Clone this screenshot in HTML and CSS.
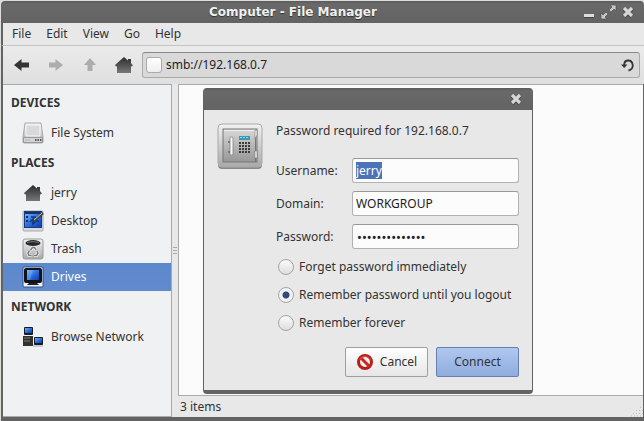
FILE: index.html
```html
<!DOCTYPE html>
<html lang="en">
<head>
<meta charset="utf-8">
<title>Computer - File Manager</title>
<link rel="stylesheet" href="styles.css">
</head>
<body>
<svg class="defs" width="0" height="0" aria-hidden="true">
  <defs>
    <linearGradient id="dark" x1="0" y1="0" x2="0" y2="1"><stop offset="0" stop-color="#2c2c2c"/><stop offset="1" stop-color="#777"/></linearGradient>
    <linearGradient id="metal" x1="0" y1="0" x2="0" y2="1"><stop offset="0" stop-color="#f2f2f2"/><stop offset="1" stop-color="#a9a9a9"/></linearGradient>
    <linearGradient id="door" x1="0" y1="0" x2="0" y2="1"><stop offset="0" stop-color="#d8d8d8"/><stop offset="1" stop-color="#969696"/></linearGradient>
    <linearGradient id="screen" x1="0" y1="0" x2="1" y2="1"><stop offset="0" stop-color="#76b2fa"/><stop offset=".5" stop-color="#2d70dc"/><stop offset="1" stop-color="#0c3fae"/></linearGradient>
    <symbol id="home" viewBox="0 0 18 16"><path d="M9 0L13 3.500V2h3v4l2 2.500-1.500 1H16V16H2V9.500H1L0 8z" fill="url(#dark)"/></symbol>
    <symbol id="close" viewBox="0 0 12 12"><path d="M2 2.500l8 8M10 2.500l-8 8" stroke="#3d3d3d" stroke-width="4.200"/><path d="M2 2l8 8M10 2l-8 8" stroke="#d6d6d6" stroke-width="3.200"/></symbol>
  </defs>
</svg>
<div class="window">
  <header class="titlebar">
    <h1>Computer - File Manager</h1>
    <div class="controls">
      <button aria-label="Minimize"><svg width="12" height="14"><path d="M1 9h10v4H1z" fill="#444"/><path d="M1 9h10v3H1z" fill="#ddd"/></svg></button>
      <button aria-label="Maximize"><svg width="17" height="16"><path d="M1 15V9l2 2 3-3 2 2-3 3 2 2zM16 1v6l-2-2-3 3-2-2 3-3-2-2z" fill="#c6c6c6" stroke="#484848" stroke-width=".6"/></svg></button>
      <button aria-label="Close"><svg width="12" height="12"><use href="#close"/></svg></button>
    </div>
  </header>
  <nav class="menubar">
    <button>File</button><button>Edit</button><button>View</button><button>Go</button><button>Help</button>
  </nav>
  <div class="toolbar">
    <button class="tool" aria-label="Back"><svg width="16" height="14"><path d="M0 7l7.500-6v3.500H15v5H7.500V13z" fill="#343434"/></svg></button>
    <button class="tool" aria-label="Forward" disabled><svg width="16" height="14"><path d="M15 7L7.500 1v3.500H1v5h6.500V13z" fill="#adadad"/></svg></button>
    <button class="tool" aria-label="Up" disabled><svg width="14" height="16"><path d="M7 1L1 8h3.500v6h5V8H13z" fill="#adadad"/></svg></button>
    <button class="tool" aria-label="Home"><svg width="18" height="16"><use href="#home"/></svg></button>
    <div class="location">
      <span class="path-icon"></span>
      <input aria-label="Location" value="smb://192.168.0.7">
      <button aria-label="Reload"><svg width="14" height="14"><path d="M7.500 12.500c3-.5 4.500-3 4.200-5.500C11.300 4 9.500 2.500 7.200 2.500 5 2.500 3.200 4 3.200 7" fill="none" stroke="#333" stroke-width="1.800"/><path d="M0 6.500h6.500L3.200 10z" fill="#333"/></svg></button>
    </div>
  </div>
  <div class="body">
    <aside class="sidebar">
      <h2>DEVICES</h2>
      <a href="#fs"><svg width="22" height="22"><path d="M3 1h16l2 14v5a1 1 0 0 1-1 1H2a1 1 0 0 1-1-1v-5z" fill="url(#metal)" stroke="#aaa"/><path d="M4 3h14v11H4z" fill="#d9d9d9" stroke="#f8f8f8"/><path d="M1.500 15.500h19v5h-19z" fill="#d5d5d5" stroke="#999"/><path d="M13 18h1.500m1 0H17m1 0h1.500" stroke="#555" stroke-width="2"/><path d="M3 18h5" stroke="#b5b5b5"/></svg>File System</a>
      <h2>PLACES</h2>
      <a href="#home-folder"><svg width="22" height="22"><use href="#home" x="2" y="3" width="18" height="16"/></svg>jerry</a>
      <a href="#desktop"><svg width="22" height="22"><rect x="1" y="1" width="20" height="20" rx="1" fill="#d7dae0" stroke="#aaa"/><rect x="2" y="1" width="18" height="17" fill="#173b83"/><path d="M3 3h16v14H3z" fill="url(#screen)"/><path d="M3 2h16v2H3z" fill="#1b3262"/><path d="M4 6h2v2H4zm0 4h2v2H4z" fill="#0a2c74"/><path d="M8 12l3-3v5l3-3h3M9 7h5" fill="none" stroke="#12377c" stroke-width="1.500"/><path d="M12 11l9-8" stroke="#41474b" stroke-width="2.500"/><path d="M12 10l8-7" stroke="#b5c3bd"/></svg>Desktop</a>
      <a href="#trash"><svg width="22" height="22"><rect x="1" y="1" width="20" height="20" rx="2" fill="url(#metal)" stroke="#999"/><ellipse cx="11" cy="5" rx="7.500" ry="3" fill="#292929"/><path d="M5 4.500q6-2 12 0" fill="none" stroke="#777"/><path d="M8.500 12l2-2.500h2l1.500 2M15 13l1 2.500-1.500 2H12M9.500 17.500H7L6 15l1.500-2.500" fill="none" stroke="#f8f8f8" stroke-width="3"/><path d="M8.500 12l2-2.500h2l1.500 2M15 13l1 2.500-1.500 2H12M9.500 17.500H7L6 15l1.500-2.500" fill="none" stroke="#777" stroke-width="1.500"/></svg>Trash</a>
      <a href="#drives" class="selected" aria-current="page"><svg width="22" height="22"><rect x="1" y="1" width="20" height="20" rx="1" fill="#f0f1f3" stroke="#2f518d"/><rect x="2" y="2" width="18" height="15" rx="2" fill="#101319"/><path d="M5 4h12v10H5z" fill="url(#screen)"/><path d="M5 4h6L8 14H5z" fill="#80b7ff" opacity=".35"/><path d="M7 17h8l2 2H5z" fill="#202020"/></svg>Drives</a>
      <h2>NETWORK</h2>
      <a href="#network"><svg width="22" height="22"><path d="M1 10h10v10H1z" fill="#33312f"/><path d="M2 12h6m-6 3h6" stroke="#85786b"/><rect x="2" y="1" width="9" height="8" rx="1" fill="#161c27"/><path d="M3 2h7v5H3z" fill="url(#screen)"/><path d="M11 18h10v3H11z" fill="#c8cacc"/><rect x="12" y="11" width="9" height="8" rx="1" fill="#161c27"/><path d="M13 12h7v5h-7z" fill="url(#screen)"/></svg>Browse Network</a>
    </aside>
    <div class="splitter"></div>
    <div class="content">
      <main class="files">
        <form class="dialog" role="dialog" aria-label="Password required">
          <div class="dialog-title"><button type="button" aria-label="Close dialog"><svg width="12" height="12"><use href="#close"/></svg></button></div>
          <div class="dialog-body">
            <svg class="safe" width="46" height="47">
              <rect x="1" y="2" width="44" height="44" rx="4" fill="#888"/>
              <rect x="1" y="1" width="44" height="43" rx="4" fill="url(#metal)" stroke="#aaa"/>
              <rect x="6" y="6" width="34" height="33" fill="url(#door)" stroke="#777"/>
              <path d="M7 7.500h32" stroke="#eee"/>
              <path d="M11 18h4v2h-4zM11 28h4v2h-4z" fill="#777"/>
              <rect x="13" y="14" width="3" height="18" rx="1" fill="#f6f6f6" stroke="#777" stroke-width=".7"/>
              <path d="M22 13h11v4H22z" fill="#3a9bb8"/><path d="M23 14.500h9" stroke="#91d5e8" stroke-dasharray="2 1"/>
              <path d="M22 20h11M22 23h11M22 26h11M22 29h11" stroke="#3c3c3c" stroke-width="2" stroke-dasharray="2 1"/>
              <path d="M38.500 8v31" stroke="#777"/>
              <path d="M38 7h2v5l-2 4zM38 28h2v7h-2z" fill="#fafafa" stroke="#777" stroke-width=".6"/>
            </svg>
            <div class="form">
              <p>Password required for 192.168.0.7</p>
              <div class="fields">
                <label for="user">Username:</label><input id="user" value="jerry">
                <label for="domain">Domain:</label><input id="domain" value="WORKGROUP">
                <label for="pass">Password:</label><input id="pass" type="password" value="secretpassword">
              </div>
              <label class="choice"><input type="radio" name="keep">Forget password immediately</label>
              <label class="choice"><input type="radio" name="keep" checked>Remember password until you logout</label>
              <label class="choice"><input type="radio" name="keep">Remember forever</label>
              <div class="actions">
                <button type="button"><svg width="18" height="18"><circle cx="9" cy="9" r="6.500" fill="#eee" stroke="#b81f18" stroke-width="3"/><path d="M4.500 4.500l9 9" stroke="#c8281f" stroke-width="3"/><path d="M3.500 7a6 6 0 0 1 11 0" fill="none" stroke="#e4564c"/></svg>Cancel</button>
                <button type="submit" class="primary">Connect</button>
              </div>
            </div>
          </div>
        </form>
      </main>
      <footer class="status"><span>3 items</span><svg width="12" height="12"><path d="M9 2.500h3M5 5.500h7M2 8.500h10M0 11h12" stroke="#bbb" stroke-dasharray="1 2"/></svg></footer>
    </div>
  </div>
</div>
<script src="script.js"></script>
</body>
</html>
```
FILE: styles.css
```css
* { box-sizing: border-box; }
html, body { height: 100%; margin: 0; }
body {
  background: #dcdedb;
  color: #333;
  font: 12px/16px "Noto Sans", sans-serif;
}
button, input { font: inherit; color: inherit; margin: 0; }
button { padding: 0; border: 0; background: none; }
svg { display: block; flex: none; }
.defs { position: absolute; }

.window {
  display: flex;
  flex-direction: column;
  min-height: 100vh;
  border: 1px solid #dcdedb;
  border-width: 1px 0 0 1px;
  background: #e8e8e8;
}
.titlebar {
  display: flex;
  align-items: center;
  height: 22px;
  padding: 0 10px 0 2px;
  border-radius: 4px 4px 0 0;
  background: linear-gradient(#5a5a5a, #696969 3px, #636363);
}
.titlebar h1 {
  flex: 1;
  margin: 0;
  color: #f0f0f0;
  font: bold 12px/20px "DejaVu Sans", sans-serif;
  text-align: center;
  text-shadow: 0 1px 1px #333;
}
.controls { display: flex; align-items: center; gap: 5px; }

.menubar {
  display: flex;
  gap: 15px;
  height: 23px;
  padding: 0 9px;
  border-left: 2px solid #636363;
  border-bottom: 1px solid #c4c4c4;
}
.toolbar {
  display: flex;
  align-items: center;
  height: 38px;
  padding: 0 4px 0 2px;
  border-left: 2px solid #636363;
  background: linear-gradient(#ebebeb, #dfdfdf);
}
.tool { display: grid; place-items: center; width: 34px; height: 34px; }
.location {
  display: flex;
  flex: 1;
  align-items: center;
  gap: 4px;
  height: 26px;
  margin-left: 1px;
  padding: 0 4px 0 3px;
  border: 1px solid #aaa;
  border-top-color: #888;
  border-radius: 3px;
  background: #d9d9d9;
}
.location input { flex: 1; min-width: 0; border: 0; padding: 0; background: none; color: #222; }
.path-icon {
  width: 16px;
  height: 16px;
  border: 1px solid #aaa;
  border-radius: 3px;
  background: linear-gradient(#fff, #eee);
}

.body {
  display: flex;
  flex: 1;
  border: solid #636363;
  border-width: 0 1px 4px 2px;
}
.sidebar {
  width: 169px;
  padding-top: 2px;
  border: 1px solid #aaa;
  border-left: 0;
  background: #f0f1f3;
}
.sidebar h2 {
  margin: 0;
  padding: 0 8px;
  font-size: 12px;
  line-height: 32px;
}
.sidebar a {
  display: flex;
  align-items: center;
  gap: 7px;
  height: 28px;
  padding-left: 19px;
  color: inherit;
  text-decoration: none;
}
.sidebar .selected {
  background: linear-gradient(#5c88cc, #628bcd);
  color: #fff;
}
.splitter { width: 6px; background: linear-gradient(#aaa, #aaa) center 163px / 4px 1px no-repeat, linear-gradient(#aaa, #aaa) center 166px / 4px 1px no-repeat, linear-gradient(#aaa, #aaa) center 169px / 4px 1px no-repeat; }
.content { display: flex; flex: 1; flex-direction: column; min-width: 0; }
.files {
  position: relative;
  flex: 1;
  border: 1px solid #aaa;
  border-right: 0;
  background: #fbfbfb;
}
.status {
  display: flex;
  align-items: center;
  justify-content: space-between;
  height: 21px;
  padding-left: 2px;
}
.status svg { align-self: flex-end; }

.dialog {
  position: absolute;
  top: 3px;
  left: 24px;
  width: 330px;
  border: solid #636363;
  border-width: 0 1px 4px;
  border-radius: 4px;
  background: #e8e8e8;
}
.dialog-title {
  display: flex;
  align-items: center;
  justify-content: flex-end;
  height: 22px;
  padding-right: 10px;
  border-radius: 3px 3px 0 0;
  background: linear-gradient(#5a5a5a, #696969 3px, #636363);
}
.dialog-body { display: flex; gap: 13px; padding: 13px; }
.form { flex: 1; min-width: 0; }
.form p { margin: 0 0 19px; }
.fields {
  display: grid;
  grid-template-columns: 68px 1fr;
  gap: 8px;
  align-items: center;
  margin-bottom: 4px;
}
.fields input {
  width: 100%;
  height: 25px;
  padding: 0 3px;
  border: 1px solid #b2b2b2;
  border-top-color: #999;
  border-radius: 3px;
  outline: 0;
  background: #fcfcfc;
  color: #222;
}
.fields input[type="password"] { padding: 0 4px; font-size: 13px; }
.fields input::selection { background: #4b74b8; color: #fff; }
.choice { display: flex; align-items: center; gap: 5px; height: 28px; padding-left: 2px; white-space: nowrap; }
.choice input {
  appearance: none;
  width: 16px;
  height: 16px;
  border: 1px solid #a5a5a5;
  border-radius: 50%;
  background: linear-gradient(#fafafa, #dedede);
}
.choice input:checked { background: radial-gradient(circle, #334a78 3px, #f2f2f2 4px); }
.actions { display: flex; justify-content: flex-end; gap: 8px; margin-top: 10px; }
.actions button {
  display: flex;
  align-items: center;
  justify-content: center;
  gap: 6px;
  width: 83px;
  height: 30px;
  border: 1px solid #a0a0a0;
  border-radius: 2px;
  background: linear-gradient(#fefefe, #e6e6e6);
}
.actions .primary {
  border-color: #6680ac;
  background: linear-gradient(#b0c8f0, #8eacdd);
}
```
FILE: script.js
```js
const user = document.getElementById("user");
user.focus();
user.select();
```
